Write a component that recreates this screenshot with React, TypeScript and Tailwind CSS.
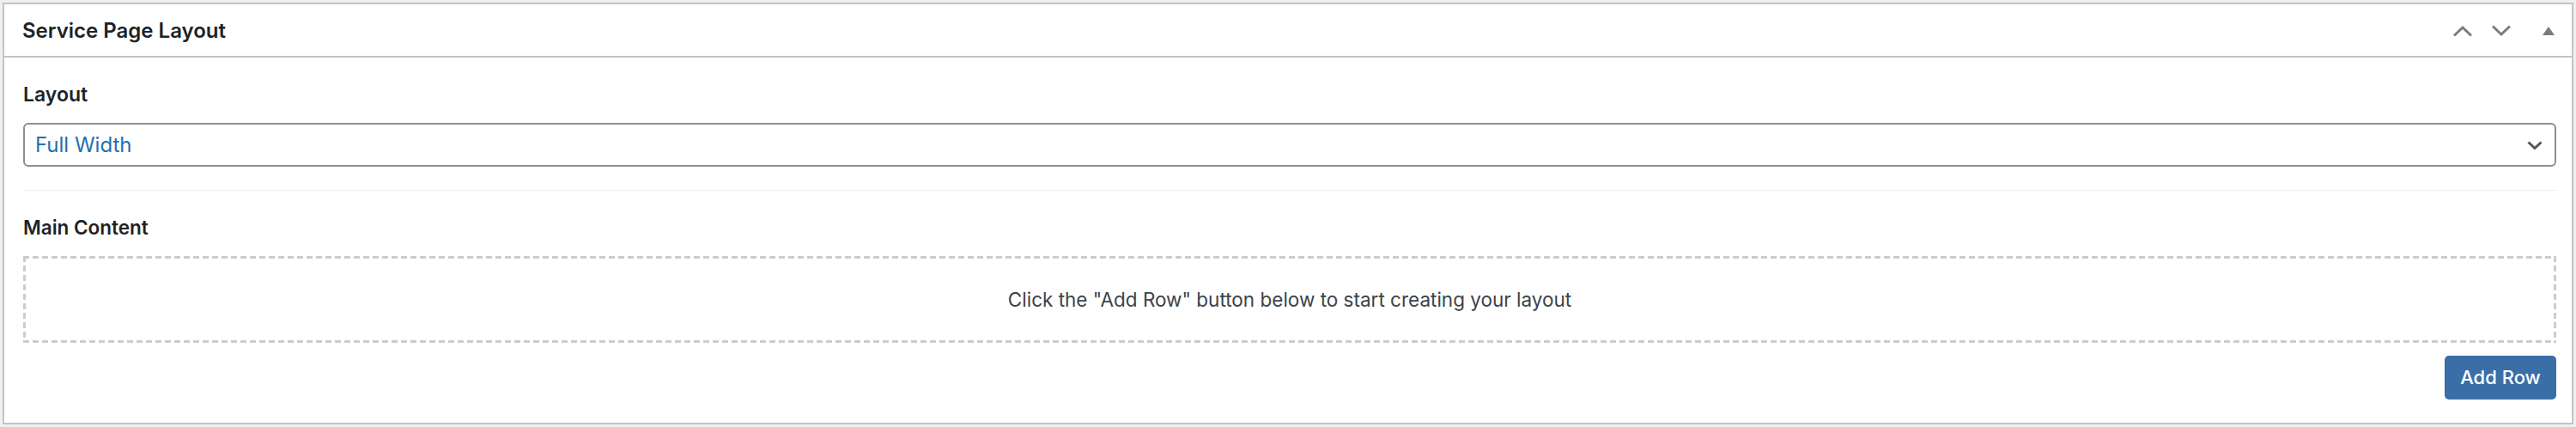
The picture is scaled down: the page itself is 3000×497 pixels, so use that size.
const font = { fontFamily: "Inter, 'Noto Sans', sans-serif" };

function ChevronUp() {
  return (
    <svg width="24" height="14" viewBox="0 0 24 14" className="block">
      <path d="M2 12.5 L12 3 L22 12.5" fill="none" stroke="#787c82" strokeWidth="3" />
    </svg>
  );
}

function ChevronDown() {
  return (
    <svg width="24" height="14" viewBox="0 0 24 14" className="block">
      <path d="M2 1.5 L12 11 L22 1.5" fill="none" stroke="#787c82" strokeWidth="3" />
    </svg>
  );
}

function Triangle() {
  return (
    <svg width="14" height="10" viewBox="0 0 14 10" className="block">
      <path d="M7 0 L14 10 L0 10 Z" fill="#787c82" />
    </svg>
  );
}

export default function App() {
  return (
    <div className="w-[3000px] h-[497px] bg-[#f0f0f1] p-[3px]" style={font}>
      <div className="h-full flex flex-col border-2 border-[#c3c4c7] bg-white">
        {/* header */}
        <div className="h-[62px] shrink-0 flex items-center justify-between pl-[21px] pr-[20px] pt-[2px] border-b-2 border-[#c3c4c7]">
          <h2 className="text-[24px] leading-[30px] font-semibold text-[#1d2327]">Service Page Layout</h2>
          <div className="flex items-center">
            <ChevronUp />
            <div className="w-[21px]" />
            <ChevronDown />
            <div className="w-[36px]" />
            <Triangle />
          </div>
        </div>

        {/* body */}
        <div className="flex-1 flex flex-col pl-[22px] pr-[18px]">
          <div className="pt-[30px] pb-[27px]">
            <label className="block text-[23px] leading-[26px] font-semibold text-[#1d2327]">Layout</label>
            <div className="mt-[20px] h-[51px] flex items-center justify-between border-2 border-[#8c8f94] rounded-[6px] pl-[12px] pr-[14px]">
              <span className="text-[24px] text-[#2271b1]">Full Width</span>
              <svg width="18" height="10" viewBox="0 0 18 10" className="block">
                <path d="M1.5 1.5 L9 8.5 L16.5 1.5" fill="none" stroke="#50575e" strokeWidth="3" />
              </svg>
            </div>
          </div>

          <div className="border-t border-[#eeeeee] pt-[30px]">
            <label className="block text-[22.5px] leading-[26px] font-semibold text-[#1d2327]">Main Content</label>
            <div className="mt-[20px] h-[101px] flex items-center justify-center bg-[linear-gradient(to_right,#cccccc_7px,transparent_7px),linear-gradient(to_right,#cccccc_7px,transparent_7px),linear-gradient(to_bottom,#cccccc_7px,transparent_7px),linear-gradient(to_bottom,#cccccc_7px,transparent_7px)] bg-[length:11px_3px,11px_3px,3px_11px,3px_11px] bg-[position:left_top,left_bottom,left_top,right_top] [background-repeat:repeat-x,repeat-x,repeat-y,repeat-y]">
              <p className="text-[22.5px] text-[#3c434a]">Click the "Add Row" button below to start creating your layout</p>
            </div>
            <div className="mt-[15px] flex justify-end">
              <button className="w-[130px] h-[51px] rounded-[5px] bg-[#3a6ea7] text-white text-[22px] font-medium">
                Add Row
              </button>
            </div>
          </div>
        </div>
      </div>
    </div>
  );
}
